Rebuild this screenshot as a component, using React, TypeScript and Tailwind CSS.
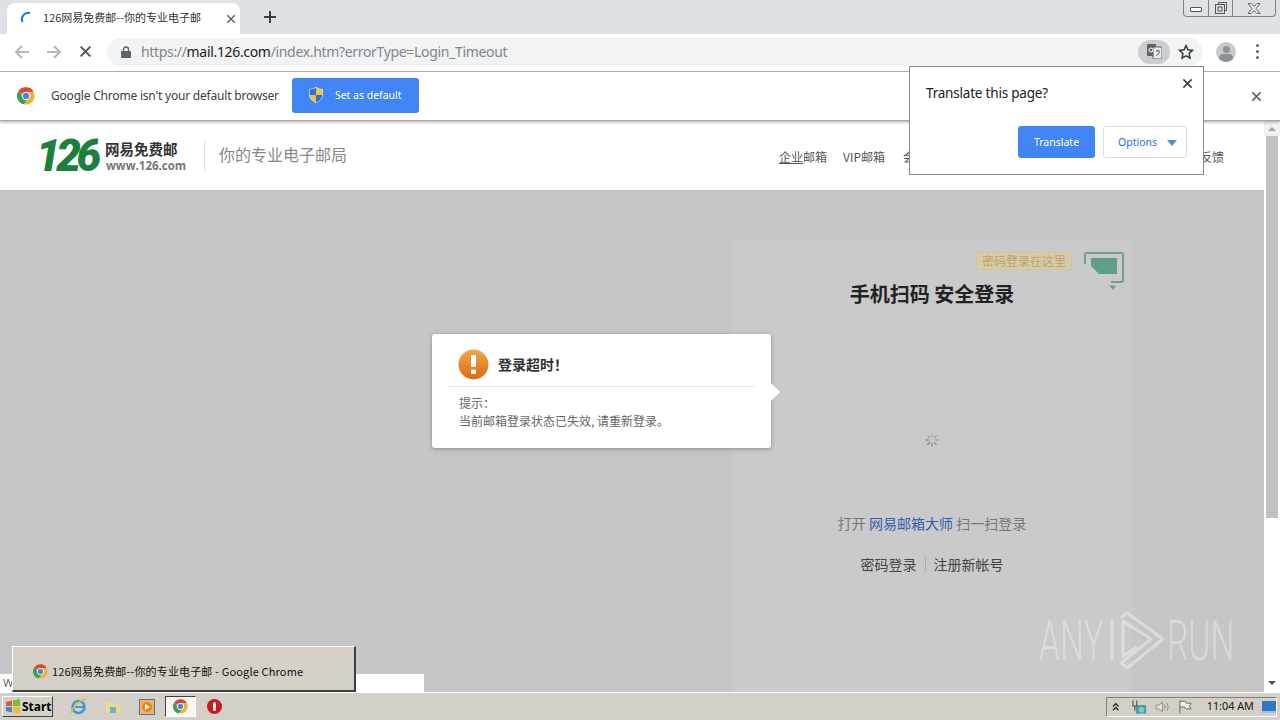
const cjk = "font-['Noto_Sans_CJK_SC','Noto_Sans',sans-serif]"

const ChromeLogo = ({ size = 18 }: { size?: number }) => (
  <svg width={size} height={size} viewBox="0 0 48 48">
    <circle cx="24" cy="24" r="23" fill="#e8b730" />
    <path d="M24 1a23 23 0 0 1 20 11.500H24a11.500 11.500 0 0 0-10.500 7L5 9.500A23 23 0 0 1 24 1z" fill="#db4437" />
    <path d="M5 9.500l9.500 16.500a11.500 11.500 0 0 0 12 9.500L17 46A23 23 0 0 1 5 9.500z" fill="#3c9d54" />
    <circle cx="24" cy="24" r="11" fill="#fff" />
    <circle cx="24" cy="24" r="8.500" fill="#4a84ea" />
  </svg>
)

const CloseIcon = ({ size = 12, color = "#5f6368" }: { size?: number; color?: string }) => (
  <svg width={size} height={size} viewBox="0 0 12 12" fill="none" stroke={color} strokeWidth="1.800">
    <path d="M1.500 1.500l9 9M10.500 1.500l-9 9" />
  </svg>
)

const Shield = () => (
  <svg width="14" height="16" viewBox="0 0 14 16">
    <path d="M0.800 2.500C3 2.500 5 2 7 0.500c2 1.500 4 2 6.200 2V8c0 3.500-3 6-6.200 7.500C3.800 14 0.800 11.500 0.800 8z" fill="#dfe8f5" stroke="#dfe8f5" strokeWidth="1.200" />
    <path d="M0.800 2.500C3 2.500 5 2 7 0.500V8H0.800z" fill="#2f6fd0" />
    <path d="M7 0.500c2 1.500 4 2 6.200 2V8H7z" fill="#f4c430" />
    <path d="M0.800 8H7v7.500C3.800 14 0.800 11.500 0.800 8z" fill="#f4c430" />
    <path d="M7 8h6.200c0 3.500-3 6-6.200 7.500z" fill="#2f6fd0" />
  </svg>
)

const TopBar = () => (
  <>
    {/* tab strip */}
    <div className={`h-[34px] bg-[#dee1e6] flex items-end pl-[7px] ${cjk}`}>
      <div className="w-[233px] h-[31px] bg-white rounded-t-lg flex items-center pl-[13px] pr-[4px]">
        <svg width="16" height="16" viewBox="0 0 16 16" fill="none" stroke="#1a73e8" strokeWidth="2">
          <path d="M2.500 11A6.500 6.500 0 0 1 10 2" />
        </svg>
        <span className="ml-[7px] mb-[2px] text-[11px] text-[#333] flex-1 whitespace-nowrap">126网易免费邮--你的专业电子邮</span>
        <CloseIcon size={10} />
      </div>
      <svg className="ml-[24px] mb-[11px]" width="12" height="12" viewBox="0 0 12 12" stroke="#3c4043" strokeWidth="2">
        <path d="M6 0v12M0 6h12" />
      </svg>
      <div className="ml-auto self-start mr-[4px] w-[93px] h-[17px] border border-t-0 border-[#7d8289] rounded-b-[4px] flex">
        <div className="w-[25px] border-r border-[#7d8289] flex items-center justify-center">
          <div className="w-[12px] h-[5px] border border-[#555] rounded-[1px] bg-white mt-[3px]" />
        </div>
        <div className="w-[24px] border-r border-[#7d8289] flex items-center justify-center">
          <svg width="12" height="12" viewBox="0 0 12 12" fill="none" stroke="#555">
            <path d="M3.500 2.500V.5h8v8H9.500" />
            <rect x=".5" y="2.500" width="9" height="9" />
            <rect x="3" y="5" width="4" height="4" />
          </svg>
        </div>
        <div className="flex-1 flex items-center justify-center">
          <svg width="14" height="11" viewBox="0 0 14 11" fill="#e8eaed" stroke="#666" strokeWidth="1">
            <path d="M1 .5h3L7 3.500 10 .5h3L9 5.500l4 5h-3L7 7.500 4 10.500H1l4-5z" />
          </svg>
        </div>
      </div>
    </div>
    {/* toolbar */}
    <div className="h-[38px] bg-white border-b border-[#b9b9b9] flex items-center pl-[14px] pr-[18px] pb-[2px]">
      <svg width="16" height="16" viewBox="0 0 16 16" fill="none" stroke="#b4b7bb" strokeWidth="2">
        <path d="M15 8H2M8 2L2 8l6 6" />
      </svg>
      <svg className="ml-[16px]" width="16" height="16" viewBox="0 0 16 16" fill="none" stroke="#b4b7bb" strokeWidth="2">
        <path d="M1 8h13M8 2l6 6-6 6" />
      </svg>
      <span className="ml-[17px]">
        <CloseIcon size={13} color="#555" />
      </span>
      <div className="ml-[15px] w-[1096px] h-[28px] rounded-full bg-[#f1f3f4] flex items-center pl-[14px] pr-[4px] font-['Noto_Sans',sans-serif]">
        <svg width="10" height="12" viewBox="0 0 10 12" fill="#5f6368">
          <rect y="5" width="10" height="7" rx="1" />
          <path d="M2.500 5.500V3.500a2.500 2.500 0 0 1 5 0v2" fill="none" stroke="#5f6368" strokeWidth="1.400" />
        </svg>
        <span className="ml-[10px] text-[14px] tracking-[-0.33px] text-[#80868b] whitespace-nowrap">
          https://<span className="text-[#202124]">mail.126.com</span>/index.htm?errorType=Login_Timeout
        </span>
        <div className="ml-auto w-[32px] h-[24px] rounded-full bg-[#cbcdcf] flex items-center justify-center">
          <svg width="15" height="15" viewBox="0 0 15 15">
            <rect width="9" height="12" rx="1" fill="#5f6368" />
            <rect x="6" y="3" width="9" height="12" rx="1" fill="#e8eaed" stroke="#5f6368" />
            <circle cx="4" cy="6" r="2" fill="none" stroke="#fff" />
            <path d="M9 7h4M11 6v1M9.500 12l3-4" stroke="#5f6368" fill="none" />
          </svg>
        </div>
        <svg className="ml-[8px] mr-[5px]" width="16" height="16" viewBox="0 0 24 24" fill="none" stroke="#3c4043" strokeWidth="2.400">
          <path d="M12 2.500l2.900 6.300 6.800.8-5 4.700 1.300 6.800-6-3.400-6 3.400 1.300-6.800-5-4.700 6.800-.8z" />
        </svg>
      </div>
      <div className="ml-[13px] w-[20px] h-[20px] rounded-full bg-[#c8cacd] overflow-hidden flex flex-col items-center">
        <div className="w-[7px] h-[7px] mt-[4px] rounded-full bg-[#8d9094]" />
        <div className="w-[14px] h-[8px] mt-[1px] rounded-full bg-[#8d9094]" />
      </div>
      <div className="ml-[20px] flex flex-col gap-[3px]">
        <div className="w-[3px] h-[3px] rounded-full bg-[#5f6368]" />
        <div className="w-[3px] h-[3px] rounded-full bg-[#5f6368]" />
        <div className="w-[3px] h-[3px] rounded-full bg-[#5f6368]" />
      </div>
    </div>
    {/* default browser bar */}
    <div className="h-[49px] bg-white border-b border-[#a8a8a8] shadow-[0_1px_3px_rgba(0,0,0,0.35)] relative z-10 flex items-center pl-[17px] pr-[18px] font-['Noto_Sans',sans-serif]">
      <ChromeLogo />
      <span className="ml-[16px] text-[12px] tracking-[-0.2px] text-[#3c4043] whitespace-nowrap">Google Chrome isn't your default browser</span>
      <button className="ml-[13px] mb-[2px] w-[127px] h-[35px] bg-[#4285f4] rounded-[3px] flex items-center pl-[17px] text-white">
        <Shield />
        <span className="ml-[12px] pt-[2px] text-[10.500px]">Set as default</span>
      </button>
      <span className="ml-auto">
        <CloseIcon size={11} />
      </span>
    </div>
  </>
)

const PageHeader = () => (
  <div className={`h-[69px] bg-white flex items-center pl-[40px] pr-[40px] ${cjk}`}>
    <span className="w-[69px] -ml-[4px] text-[44px] leading-none font-black italic text-[#1c7f3d] tracking-[-4.500px] font-['Roboto',sans-serif]">126</span>
    <div className="w-[79px] flex flex-col leading-none mt-[2px]">
      <span className="text-[14.500px] leading-[19px] font-semibold text-[#333] whitespace-nowrap">网易免费邮</span>
      <span className="text-[11.500px] leading-[16px] font-bold text-[#777] font-['Open_Sans',sans-serif] pl-[1px] whitespace-nowrap">www.126.com</span>
    </div>
    <div className="ml-[20px] w-px h-[30px] bg-[#ddd]" />
    <span className="ml-[14px] mb-[3px] text-[16px] text-[#888] whitespace-nowrap">你的专业电子邮局</span>
    <nav className="ml-[432px] flex-1 flex gap-4 text-[12px] text-[#555] mt-[3px]">
      <a>
        <span className="underline">企业</span>邮箱
      </a>
      <a>VIP邮箱</a>
      <a className="ml-[2px]">会员中心</a>
      <a className="ml-auto">意见反馈</a>
    </nav>
  </div>
)

const LoginPanel = () => (
  <div className={`w-[400px] bg-[#cacaca] flex flex-col items-center h-[452px] ${cjk}`}>
    <div className="self-end flex items-start mt-[11px] mr-[8px] h-[40px]">
      <span className="w-[96px] h-[18px] bg-[#d3cdae] border border-[#d8c48d] text-[12px] leading-[16px] text-[#c2a25c] text-center">密码登录在这里</span>
      <svg className="ml-[12px]" width="40" height="40" viewBox="0 0 40 40">
        <path d="M3 1h34a2 2 0 0 1 2 2v25a2 2 0 0 1-2 2H27" fill="none" stroke="#6fa08e" strokeWidth="2" />
        <path d="M1 12V3a2 2 0 0 1 2-2" fill="none" stroke="#6fa08e" strokeWidth="2" />
        <path d="M7 6h26v16H15L7 14z" fill="#5f9f87" />
        <path d="M25 33l7 1-3 4z" fill="#6fa08e" />
      </svg>
    </div>
    <h2 className="text-[20px] leading-[28px] -mt-[12px] font-bold text-[#222]">手机扫码 安全登录</h2>
    <svg className="mt-[125px]" width="14" height="14" viewBox="0 0 14 14" stroke="#888" strokeWidth="1.600" strokeLinecap="round">
      <path d="M7 1v2.500" opacity=".4" />
      <path d="M11.200 2.800L9.500 4.500" opacity=".5" />
      <path d="M13 7h-2.500" opacity=".6" />
      <path d="M11.200 11.200L9.500 9.500" opacity=".7" />
      <path d="M7 13v-2.500" opacity=".85" />
      <path d="M2.800 11.200l1.700-1.700" />
      <path d="M1 7h2.500" opacity=".9" />
      <path d="M2.800 2.800l1.700 1.700" opacity=".5" />
    </svg>
    <p className="mt-[66px] text-[14px] leading-[20px] text-[#777] whitespace-nowrap">
      打开 <span className="text-[#2f5fae]">网易邮箱大师</span> 扫一扫登录
    </p>
    <div className="mt-[21px] flex items-center text-[14px] leading-[20px] text-[#444]">
      <span>密码登录</span>
      <span className="mx-[8px] w-px h-[14px] bg-[#aaa]" />
      <span>注册新帐号</span>
    </div>
  </div>
)

const TimeoutDialog = () => (
  <div className={`absolute left-[432px] top-[213px] w-[339px] h-[114px] bg-white rounded-[3px] shadow-[0_1px_4px_rgba(0,0,0,0.3)] ${cjk}`}>
    <div className="mx-[16px] h-[53px] border-b border-[#e6e6e6] flex items-center pl-[10px] pt-[8px]">
      <svg width="31" height="31" viewBox="0 0 31 31">
        <defs>
          <linearGradient id="warn" x1="0" y1="0" x2="0" y2="1">
            <stop offset="0" stopColor="#f0a94c" />
            <stop offset="1" stopColor="#dd6a10" />
          </linearGradient>
        </defs>
        <circle cx="15.500" cy="15.500" r="15" fill="url(#warn)" />
        <rect x="13" y="6" width="5" height="12" rx="1" fill="#fff" />
        <rect x="13" y="20.500" width="5" height="4.500" rx="1" fill="#fff" />
      </svg>
      <span className="ml-[9px] text-[14px] font-bold text-[#333]">登录超时！</span>
    </div>
    <div className="pl-[27px] pt-[7px] text-[12px] leading-[18px] text-[#666]">
      <p>提示：</p>
      <p>当前邮箱登录状态已失效, 请重新登录。</p>
    </div>
    <div className="absolute right-[-9px] top-[49px] w-0 h-0 border-y-[9px] border-y-transparent border-l-[9px] border-l-white" />
  </div>
)

const TranslateBubble = () => (
  <div className="absolute left-[909px] top-[66px] z-30 w-[295px] h-[109px] bg-white border border-[#8a8a8a] font-['Noto_Sans',sans-serif]">
    <p className="absolute left-[16px] top-[16px] text-[13.500px] tracking-[-0.2px] leading-[20px] text-[#202124]">Translate this page?</p>
    <span className="absolute right-[10px] top-[11px]">
      <CloseIcon size={11} color="#444" />
    </span>
    <div className="absolute right-[16px] top-[59px] flex gap-[8px] text-[10.500px]">
      <button className="w-[77px] h-[32px] pt-[2px] bg-[#4285f4] rounded-[3px] text-white">Translate</button>
      <button className="w-[84px] h-[32px] pt-[2px] bg-white border border-[#dadce0] rounded-[3px] text-[#1a73e8] flex items-center pl-[14px]">
        Options
        <span className="ml-[10px] w-0 h-0 border-x-[5px] border-x-transparent border-t-[6px] border-t-[#4a90e2]" />
      </button>
    </div>
  </div>
)

const Watermark = () => (
  <div className="absolute left-[1039px] top-[489px] flex items-center text-white/35 font-['Roboto',sans-serif] font-light text-[56px] leading-none h-[62px]">
    <span className="inline-block w-[64px] scale-x-60 origin-left whitespace-nowrap">ANY</span>
    <svg width="64" height="62" viewBox="0 0 64 62" fill="none" stroke="rgba(255,255,255,0.38)" strokeWidth="3" strokeLinejoin="round">
      <path d="M9 10v40" />
      <path d="M18 8l6-5 36 26-36 29-6-5 30-24-28-18v35l14-9" />
    </svg>
    <span className="inline-block w-[62px] scale-x-60 origin-left whitespace-nowrap">RUN</span>
  </div>
)

const Scrollbar = () => (
  <div className="w-[16px] bg-white flex flex-col items-center">
    <div className="w-full bg-[#f1f1f1] h-[15px] flex items-center justify-center">
      <span className="w-0 h-0 border-x-[4px] border-x-transparent border-b-[4px] border-b-[#a3a3a3]" />
    </div>
    <div className="w-[12px] h-[382px] bg-[#c1c1c1]" />
    <div className="mt-auto mb-[7px] w-0 h-0 border-x-[4px] border-x-transparent border-t-[4px] border-t-[#505050]" />
  </div>
)

const Taskbar = () => (
  <div className={`h-[28px] bg-[#d4d0c8] border-t border-white flex items-center pl-[2px] pr-[3px] ${cjk}`}>
    <div className="w-[51px] h-[21px] bg-[#d4d0c8] border border-t-white border-l-white border-b-[#404040] border-r-[#404040] flex items-center pl-[2px] gap-[1px]">
      <svg width="16" height="15" viewBox="0 0 16 15">
        <path d="M1 3l6-1.500V7H1z" fill="#e2572b" />
        <path d="M8 1.500L15 0v7H8z" fill="#7fb83e" />
        <path d="M1 8h6v5.500L1 12z" fill="#3a86d8" />
        <path d="M8 8h7v7l-7-1.500z" fill="#f0bd2c" />
      </svg>
      <span className="text-[12px] font-bold text-black font-['Noto_Sans',sans-serif]">Start</span>
    </div>
    {/* ie */}
    <svg className="ml-[17px]" width="17" height="17" viewBox="0 0 17 17" fill="none">
      <circle cx="8.500" cy="9" r="6" stroke="#3b9ad9" strokeWidth="2.500" />
      <path d="M3 9h11" stroke="#3b9ad9" strokeWidth="2" />
      <path d="M1 15C3 9 9 2 16 1" stroke="#e6b93c" strokeWidth="1.500" />
    </svg>
    {/* explorer */}
    <svg className="ml-[18px]" width="16" height="15" viewBox="0 0 16 15">
      <path d="M1 3h6l1 2h7v9H1z" fill="#f0d98c" />
      <rect x="5" y="8" width="6" height="6" fill="#6bb2d8" />
    </svg>
    {/* media player */}
    <div className="ml-[18px] w-[16px] h-[16px] border border-[#3d79b8] bg-[#f6b15b] flex items-center justify-center">
      <div className="w-[10px] h-[10px] rounded-full bg-[#e8801f] flex items-center justify-center">
        <span className="ml-[1px] w-0 h-0 border-y-[3px] border-y-transparent border-l-[5px] border-l-white" />
      </div>
    </div>
    <div className="ml-[10px] w-[31px] h-[21px] bg-[#f7f6f3] border border-t-[#404040] border-l-[#404040] border-b-white border-r-white flex items-center justify-center">
      <ChromeLogo size={15} />
    </div>
    {/* opera style badge */}
    <div className="ml-[11px] w-[15px] h-[15px] rounded-full bg-[#c81c1c] flex items-center justify-center">
      <div className="w-[3px] h-[9px] rounded-full bg-white" />
    </div>
    {/* tray */}
    <div className="ml-auto w-[171px] h-[20px] border border-[#808080] border-r-white border-b-white flex items-center pl-[5px] font-['Noto_Sans',sans-serif]">
      <svg width="8" height="10" viewBox="0 0 8 10" fill="none" stroke="#222" strokeWidth="1.300">
        <path d="M1 4.500L4 1.500l3 3M1 8.500l3-3 3 3" />
      </svg>
      <svg className="ml-[12px]" width="16" height="16" viewBox="0 0 16 16">
        <rect x="4" y="6" width="11" height="9" fill="#4f9aa8" />
        <circle cx="10" cy="11" r="3" fill="#7fd0b0" />
        <path d="M1 1v6h4V1M3 7v5" fill="none" stroke="#555" strokeWidth="1.200" />
      </svg>
      <svg className="ml-[8px]" width="16" height="14" viewBox="0 0 16 14" fill="none" stroke="#8a8a8a">
        <path d="M1 5h3l4-3v10l-4-3H1z" fill="#e4e2dc" />
        <path d="M10 4.500c1 1.500 1 3.500 0 5M12.500 3c1.800 2.500 1.800 5.500 0 8" />
      </svg>
      <svg className="ml-[8px]" width="16" height="15" viewBox="0 0 16 15" fill="none" stroke="#666">
        <path d="M2 1v14M2 2h6l1 2h5l-2 3 2 3H8L7 8H2" fill="#f1efe9" />
      </svg>
      <span className="ml-[14px] text-[10.800px] text-[#111] whitespace-nowrap">11:04 AM</span>
      <div className="ml-[8px] w-[15px] h-[12px] bg-[#2f78c4] border-b-2 border-[#9cc0e4]" />
    </div>
  </div>
)

export default function App() {
  return (
    <div className="relative w-[1280px] h-[720px] overflow-hidden bg-white">
      <TopBar />
      <div className="h-[571px] flex">
        <div className="flex-1 flex flex-col">
          <PageHeader />
          <div className="flex-1 bg-[#c6c6c6] flex justify-end pr-[132px] pt-[50px] overflow-hidden border-t border-[#c0c0c0]">
            <LoginPanel />
          </div>
        </div>
        <Scrollbar />
      </div>
      <Taskbar />

      {/* things lying over the page */}
      <div className="absolute left-0 top-[121px]">
        <TimeoutDialog />
        <Watermark />
      </div>
      <TranslateBubble />
      <div className="absolute left-0 top-[674px] w-[424px] h-[18px] bg-white text-[11px] leading-[18px] pl-[3px] text-[#666] font-['Noto_Sans',sans-serif] overflow-hidden">W</div>
      <div className={`absolute left-[12px] top-[646px] w-[344px] h-[46px] bg-[#d4d0c8] border border-t-white border-l-white border-b-[#404040] border-r-[#404040] border-b-2 border-r-2 flex items-center pl-[20px] pt-[5px] ${cjk}`}>
        <ChromeLogo size={15} />
        <span className="ml-[4px] text-[11px] tracking-[0.15px] text-[#111] whitespace-nowrap">126网易免费邮--你的专业电子邮 - Google Chrome</span>
      </div>
    </div>
  )
}
